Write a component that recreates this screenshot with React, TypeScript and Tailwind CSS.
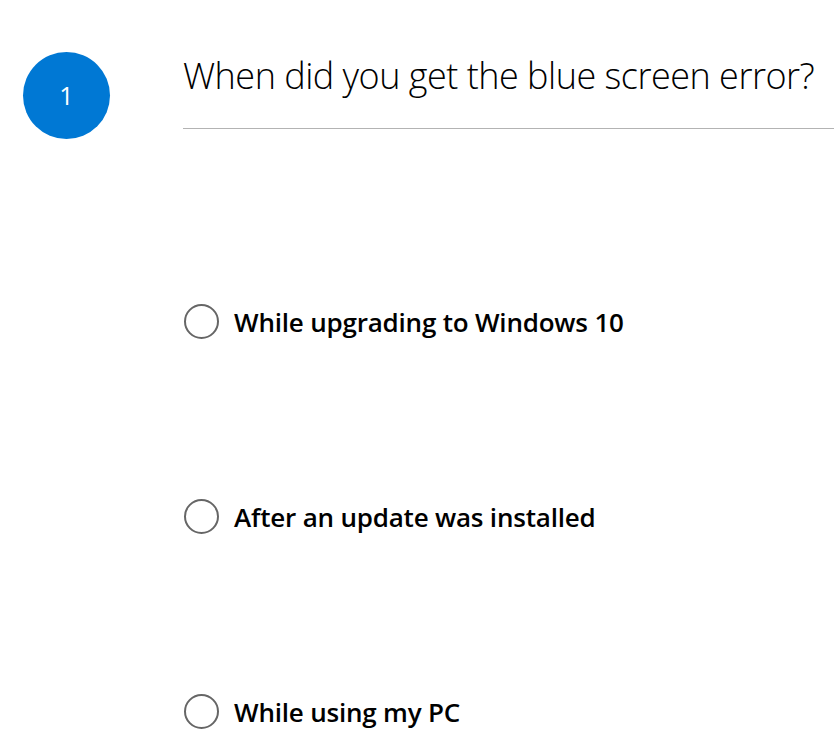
const options = ['While upgrading to Windows 10', 'After an update was installed', 'While using my PC'];

function RadioOption({ label }: { label: string }) {
  return (
    <label className="flex items-center h-[35px] cursor-pointer">
      <span className="w-[35px] h-[35px] rounded-full border-[2.5px] border-[#666666] shrink-0" />
      <span className="ml-[15px] text-[26px] font-semibold text-black leading-none tracking-[-0.2px]">{label}</span>
    </label>
  );
}

export default function App() {
  return (
    <div className="w-[834px] h-[749px] bg-white overflow-hidden flex" style={{ fontFamily: '"Open Sans", "Noto Sans", sans-serif' }}>
      <div className="w-[183px] shrink-0 pl-[23px] pt-[52px]">
        <div className="w-[87px] h-[87px] rounded-full bg-[#0078d4] flex items-center justify-center text-white text-[25px]">1</div>
      </div>
      <div className="flex-1 pt-[52px]">
        <h1 className="text-[36px] font-light text-black leading-[48px] tracking-[-0.5px] whitespace-nowrap">When did you get the blue screen error?</h1>
        <div className="mt-[28px] h-px bg-[#b3b3b3]" />
        <div className="mt-[175px] flex flex-col gap-[160px] pl-px">
          {options.map((o) => (
            <RadioOption key={o} label={o} />
          ))}
        </div>
      </div>
    </div>
  );
}
